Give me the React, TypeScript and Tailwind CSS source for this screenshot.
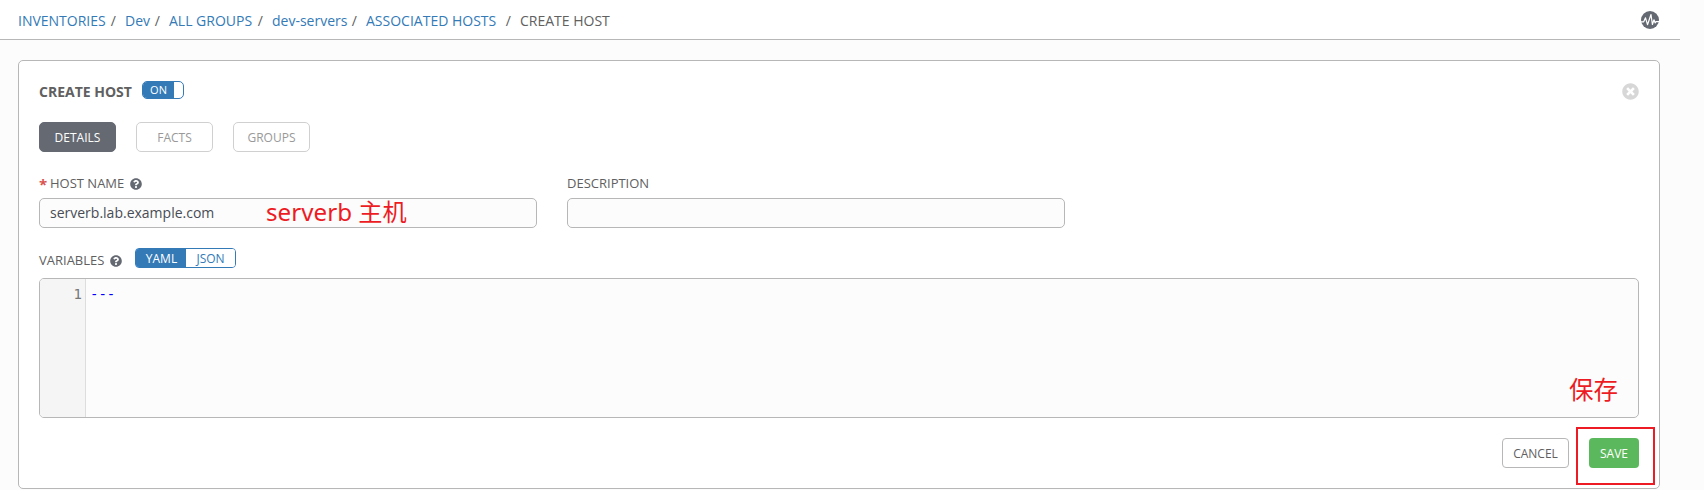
import { FaQuestionCircle, FaTimesCircle } from "react-icons/fa";

function Crumb({ children, width }: { children: string; width: string }) {
  return (
    <span className={`flex shrink-0 justify-between whitespace-nowrap ${width}`}>
      <a className="text-[#337ab7]">{children}</a>
      <span>/</span>
    </span>
  );
}

function TabButton({ label, active = false }: { label: string; active?: boolean }) {
  return (
    <button
      className={`h-[30px] w-[77px] rounded-[5px] border pt-px text-[12px] ${
        active ? "border-[#646972] bg-[#646972] text-white" : "border-[#d0d0d0] bg-white text-[#999]"
      }`}
    >
      {label}
    </button>
  );
}

function ActivityIcon() {
  return (
    <svg width="18" height="18" viewBox="0 0 18 18">
      <circle cx="9" cy="9" r="9" fill="#646972" />
      <path
        d="M0 10.8h2.700L4.500 6.800l2 6.900L10 3.500l1.400 10L13 8.800l1.100 3.100.9-1.300h3"
        fill="none"
        stroke="white"
        strokeWidth="1.2"
        strokeLinejoin="round"
      />
    </svg>
  );
}

export default function App() {
  return (
    <div className="h-[490px] w-[1704px] overflow-hidden bg-[#fcfcfc] font-['Open_Sans','Noto_Sans_CJK_SC',sans-serif] text-[14px] text-[#606060]">
      <header className="flex h-[40px] w-[1680px] items-center justify-between border-b border-[#b7b7b7] bg-white pr-[21px] pl-[18px]">
        <nav className="flex gap-[9px] pt-[2px]">
          <Crumb width="w-[98px]">INVENTORIES</Crumb>
          <Crumb width="w-[35px]">Dev</Crumb>
          <Crumb width="w-[94px]">ALL GROUPS</Crumb>
          <Crumb width="w-[85px]">dev-servers</Crumb>
          <Crumb width="w-[145px]">ASSOCIATED HOSTS</Crumb>
          <span>CREATE HOST</span>
        </nav>
        <ActivityIcon />
      </header>

      <main className="relative mt-[20px] ml-[18px] h-[429px] w-[1642px] rounded-[5px] border border-[#b7b7b7] bg-white px-[20px] pt-[20px]">
        <div className="flex h-[22px] items-center">
          <h1 className="-mt-[2px] w-[103px] font-bold">CREATE HOST</h1>
          <span className="-mt-[4px] flex h-[18px] w-[42px] overflow-hidden rounded-[5px] border border-[#337ab7]">
            <span className="flex w-[31px] items-center justify-center bg-[#337ab7] text-[11px] text-white">ON</span>
          </span>
          <FaTimesCircle className="-mt-px ml-auto size-[17px] text-[#d7d7d7]" />
        </div>

        <div className="mt-[19px] flex gap-[20px]">
          <TabButton label="DETAILS" active />
          <TabButton label="FACTS" />
          <TabButton label="GROUPS" />
        </div>

        <div className="mt-[22px] flex gap-[30px]">
          <div className="w-[498px]">
            <label className="flex h-[20px] items-center text-[13px]">
              <span className="w-[11px] text-[15px] font-bold text-[#d9534f]">*</span>
              HOST NAME
              <FaQuestionCircle className="-mt-px ml-[6px] size-[12px] text-[#646972]" />
            </label>
            <div className="relative mt-[4px] flex h-[30px] items-center rounded-[5px] border border-[#b7b7b7] bg-[#fcfcfc] pb-[2px] pl-[10px] text-[#484c54]">
              serverb.lab.example.com
              <span className="absolute -top-[5px] left-[226px] font-['Noto_Sans','Noto_Sans_CJK_SC',sans-serif] text-[24.200px] leading-[36px] whitespace-nowrap text-[#ed1c24]">
                serverb 主机
              </span>
            </div>
          </div>
          <div className="w-[498px]">
            <label className="flex h-[20px] items-center text-[13px]">DESCRIPTION</label>
            <div className="mt-[4px] h-[30px] rounded-[5px] border border-[#b7b7b7] bg-[#fcfcfc]" />
          </div>
        </div>

        <div className="mt-[20px] flex h-[24px] text-[13px]">
          <span className="mt-[3px] flex h-[20px] w-[96px] items-center">
            VARIABLES
            <FaQuestionCircle className="-mt-px ml-[6px] size-[12px] text-[#646972]" />
          </span>
          <div className="flex h-[20px] w-[101px] overflow-hidden rounded-[4px] border border-[#337ab7] text-[12px]">
            <span className="-m-px flex w-[52px] items-center justify-center rounded-l-[4px] border border-[#0a7bf0] bg-[#337ab7] pt-px pl-px text-white">
              YAML
            </span>
            <span className="flex flex-1 items-center justify-center bg-white pt-px text-[#337ab7]">JSON</span>
          </div>
        </div>

        <div className="relative mt-[6px] flex h-[140px] overflow-hidden rounded-[5px] border border-[#b7b7b7] bg-[#fcfcfc] font-['DejaVu_Sans_Mono',monospace] text-[14px] leading-[20px]">
          <div className="w-[46px] border-r border-[#ddd] bg-[#f5f5f5] pt-[5px] pr-[3px] text-right text-[#777]">1</div>
          <div className="pt-[5px] pl-[4px] text-[#00f]">---</div>
          <span className="absolute top-[92px] right-[20px] font-['Noto_Sans_CJK_SC',sans-serif] text-[24.500px] leading-[36px] text-[#ed1c24]">
            保存
          </span>
        </div>

        <div className="mt-[20px] flex justify-end gap-[20px] text-[12px]">
          <button className="h-[30px] w-[67px] rounded-[4px] border border-[#b7b7b7] bg-white pt-px">CANCEL</button>
          <button className="h-[30px] w-[50px] rounded-[4px] bg-[#5cb85c] pt-px text-white">SAVE</button>
        </div>
        <div className="absolute top-[366px] left-[1557px] h-[58px] w-[79px] border-2 border-[#ed1c24]" />
      </main>
    </div>
  );
}
